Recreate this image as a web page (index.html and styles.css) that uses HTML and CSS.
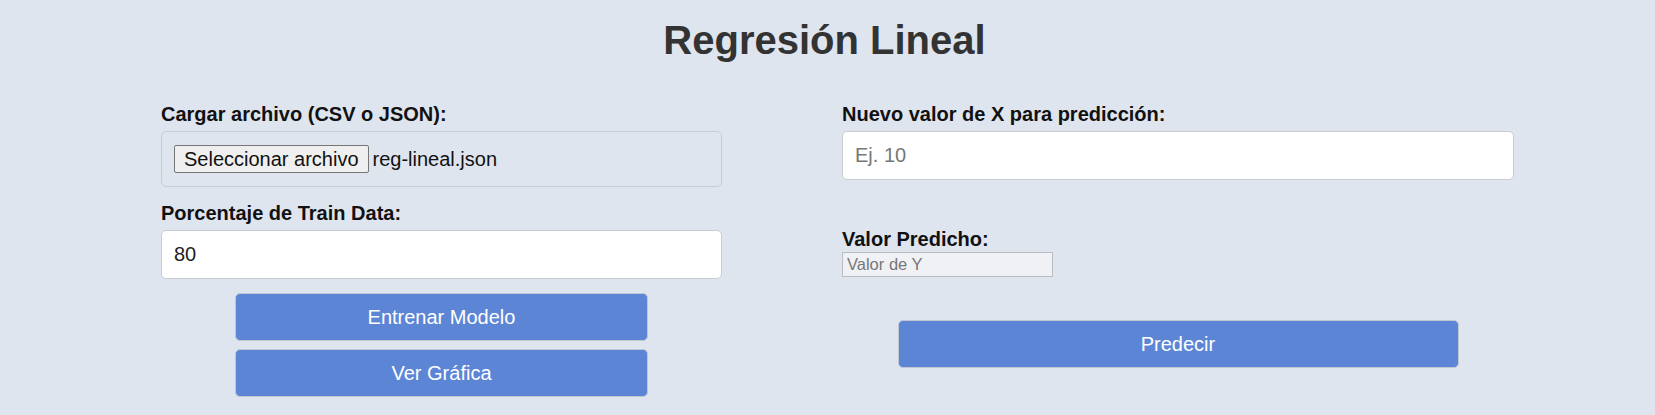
FILE: index.html
```html
<!DOCTYPE html>
<html lang="es">
<head>
<meta charset="utf-8">
<title>Regresión Lineal</title>
<link rel="stylesheet" href="styles.css">
</head>
<body>
<h1 class="title">Regresión Lineal</h1>
<main class="layout">
  <section class="col col-left">
    <label class="label">Cargar archivo (CSV o JSON):</label>
    <div class="file-box">
      <span class="file-btn">Seleccionar archivo</span>
      <span class="file-name">reg-lineal.json</span>
    </div>
    <label class="label label-gap">Porcentaje de Train Data:</label>
    <input class="field" type="text" value="80">
    <div class="actions">
      <button class="btn btn-left">Entrenar Modelo</button>
      <button class="btn btn-left">Ver Gráfica</button>
    </div>
  </section>
  <section class="col col-right">
    <label class="label">Nuevo valor de X para predicción:</label>
    <input class="field" type="text" placeholder="Ej. 10">
    <label class="label label-result">Valor Predicho:</label>
    <input class="output" type="text" placeholder="Valor de Y" readonly>
    <div class="actions actions-right">
      <button class="btn btn-right">Predecir</button>
    </div>
  </section>
</main>
</body>
</html>
```
FILE: styles.css
```css
* { box-sizing: border-box; }

body {
  margin: 0;
  background: #dfe5ee;
  font-family: "Liberation Sans", Arial, sans-serif;
  color: #111;
}

.title {
  margin: 17px 0 0;
  padding-right: 6px;
  font-size: 40px;
  line-height: 46px;
  font-weight: bold;
  color: #333;
  text-align: center;
}

.layout {
  display: grid;
  grid-template-columns: 561px 672px;
  column-gap: 120px;
  margin-top: 40px;
  padding-left: 161px;
}

.col {
  display: flex;
  flex-direction: column;
  align-items: stretch;
}

.label {
  display: block;
  font-size: 20px;
  line-height: 23px;
  font-weight: bold;
  color: #111;
  margin-bottom: 5px;
}

.label-gap { margin-top: 15px; }

.label-result {
  margin-top: 48px;
  margin-bottom: 1px;
}

.file-box {
  display: flex;
  align-items: center;
  height: 56px;
  padding: 0 12px;
  border: 1px solid #c9cdd3;
  border-radius: 5px;
  font-size: 20px;
  color: #111;
}

.file-btn {
  display: inline-flex;
  align-items: center;
  height: 28px;
  padding: 0 9px;
  background: #efefef;
  border: 1px solid #767676;
  border-radius: 2px;
  color: #111;
  margin-right: 4px;
}

.field {
  display: block;
  width: 100%;
  height: 49px;
  padding: 0 12px;
  border: 1px solid #c9cdd3;
  border-radius: 5px;
  background: #fff;
  font-family: inherit;
  font-size: 20px;
  color: #222;
  outline: none;
}

.field::placeholder { color: #777; }

.output {
  display: block;
  width: 211px;
  height: 25px;
  padding: 0 4px;
  border: 1px solid #b9bcc1;
  border-radius: 0;
  background: #eff1f4;
  font-family: inherit;
  font-size: 16.5px;
  color: #222;
  outline: none;
}

.output::placeholder { color: #777; }

.actions {
  display: flex;
  flex-direction: column;
  align-items: center;
  gap: 8px;
  margin-top: 14px;
}

.actions-right { margin-top: 43px; }

.btn {
  display: flex;
  align-items: center;
  justify-content: center;
  height: 48px;
  padding: 0;
  background: #5c85d6;
  border: 1px solid #c2c8d2;
  border-radius: 5px;
  color: #fff;
  font-family: inherit;
  font-size: 20px;
  cursor: pointer;
}

.btn-left { width: 413px; }
.btn-right { width: 561px; }
```
